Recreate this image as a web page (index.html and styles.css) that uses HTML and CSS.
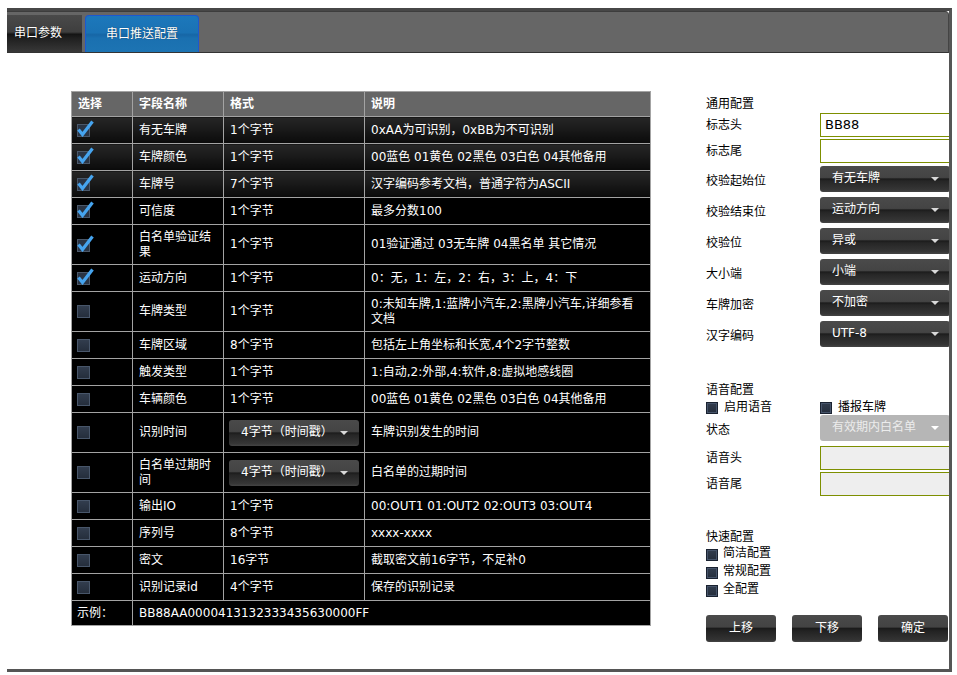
FILE: index.html
```html
<!DOCTYPE html>
<html lang="zh-CN">
<head>
<meta charset="utf-8">
<title>串口推送配置</title>
<link rel="stylesheet" href="styles.css">
</head>
<body>
<div class="frame">
  <div class="tabbar">
    <div class="tab tab-dark">串口参数</div>
    <div class="tab tab-active">串口推送配置</div>
  </div>
  <div class="content">
    <table class="fields">
      <colgroup><col class="c1"><col class="c2"><col class="c3"><col class="c4"></colgroup>
      <thead>
        <tr><th>选择</th><th>字段名称</th><th>格式</th><th>说明</th></tr>
      </thead>
      <tbody>
        <tr class="g"><td><span class="ck on"><svg width="17" height="17" viewBox="0 0 17 17"><rect x="0.5" y="4.5" width="12" height="12" fill="#2a3444" stroke="#4a586a"/><path d="M1.5 9.5 L5.5 14.5 L15.5 1.5" fill="none" stroke="#46a4ef" stroke-width="3.2"/></svg></span></td><td>有无车牌</td><td>1个字节</td><td>0xAA为可识别，0xBB为不可识别</td></tr>
        <tr class="g"><td><span class="ck on"><svg width="17" height="17" viewBox="0 0 17 17"><rect x="0.5" y="4.5" width="12" height="12" fill="#2a3444" stroke="#4a586a"/><path d="M1.5 9.5 L5.5 14.5 L15.5 1.5" fill="none" stroke="#46a4ef" stroke-width="3.2"/></svg></span></td><td>车牌颜色</td><td>1个字节</td><td>00蓝色 01黄色 02黑色 03白色 04其他备用</td></tr>
        <tr class="g"><td><span class="ck on"><svg width="17" height="17" viewBox="0 0 17 17"><rect x="0.5" y="4.5" width="12" height="12" fill="#2a3444" stroke="#4a586a"/><path d="M1.5 9.5 L5.5 14.5 L15.5 1.5" fill="none" stroke="#46a4ef" stroke-width="3.2"/></svg></span></td><td>车牌号</td><td>7个字节</td><td>汉字编码参考文档，普通字符为ASCII</td></tr>
        <tr><td><span class="ck on"><svg width="17" height="17" viewBox="0 0 17 17"><rect x="0.5" y="4.5" width="12" height="12" fill="#2a3444" stroke="#4a586a"/><path d="M1.5 9.5 L5.5 14.5 L15.5 1.5" fill="none" stroke="#46a4ef" stroke-width="3.2"/></svg></span></td><td>可信度</td><td>1个字节</td><td>最多分数100</td></tr>
        <tr class="tall"><td><span class="ck on"><svg width="17" height="17" viewBox="0 0 17 17"><rect x="0.5" y="4.5" width="12" height="12" fill="#2a3444" stroke="#4a586a"/><path d="M1.5 9.5 L5.5 14.5 L15.5 1.5" fill="none" stroke="#46a4ef" stroke-width="3.2"/></svg></span></td><td>白名单验证结果</td><td>1个字节</td><td>01验证通过 03无车牌 04黑名单 其它情况</td></tr>
        <tr><td><span class="ck on"><svg width="17" height="17" viewBox="0 0 17 17"><rect x="0.5" y="4.5" width="12" height="12" fill="#2a3444" stroke="#4a586a"/><path d="M1.5 9.5 L5.5 14.5 L15.5 1.5" fill="none" stroke="#46a4ef" stroke-width="3.2"/></svg></span></td><td>运动方向</td><td>1个字节</td><td>0：无，1：左，2：右，3：上，4：下</td></tr>
        <tr class="tall"><td><span class="box tbox"></span></td><td>车牌类型</td><td>1个字节</td><td>0:未知车牌,1:蓝牌小汽车,2:黑牌小汽车,详细参看文档</td></tr>
        <tr><td><span class="box tbox"></span></td><td>车牌区域</td><td>8个字节</td><td>包括左上角坐标和长宽,4个2字节整数</td></tr>
        <tr><td><span class="box tbox"></span></td><td>触发类型</td><td>1个字节</td><td>1:自动,2:外部,4:软件,8:虚拟地感线圈</td></tr>
        <tr><td><span class="box tbox"></span></td><td>车辆颜色</td><td>1个字节</td><td>00蓝色 01黄色 02黑色 03白色 04其他备用</td></tr>
        <tr class="tall"><td><span class="box tbox"></span></td><td>识别时间</td><td><div class="sel tsel">4字节（时间戳）</div></td><td>车牌识别发生的时间</td></tr>
        <tr class="tall"><td><span class="box tbox"></span></td><td>白名单过期时间</td><td><div class="sel tsel">4字节（时间戳）</div></td><td>白名单的过期时间</td></tr>
        <tr><td><span class="box tbox"></span></td><td>输出IO</td><td>1个字节</td><td>00:OUT1 01:OUT2 02:OUT3 03:OUT4</td></tr>
        <tr><td><span class="box tbox"></span></td><td>序列号</td><td>8个字节</td><td>xxxx-xxxx</td></tr>
        <tr><td><span class="box tbox"></span></td><td>密文</td><td>16字节</td><td>截取密文前16字节，不足补0</td></tr>
        <tr><td><span class="box tbox"></span></td><td>识别记录id</td><td>4个字节</td><td>保存的识别记录</td></tr>
        <tr class="ex"><td>示例：</td><td colspan="3">BB88AA0000413132333435630000FF</td></tr>
      </tbody>
    </table>

    <div class="panel">
      <div class="ptitle t1">通用配置</div>
      <div class="prow in1"><span class="plabel">标志头</span><div class="pin">BB88</div></div>
      <div class="prow in2"><span class="plabel">标志尾</span><div class="pin"></div></div>
      <div class="prow s1"><span class="plabel sl">校验起始位</span><div class="sel psel">有无车牌</div></div>
      <div class="prow sn"><span class="plabel sl">校验结束位</span><div class="sel psel">运动方向</div></div>
      <div class="prow sn"><span class="plabel sl">校验位</span><div class="sel psel">异或</div></div>
      <div class="prow sn"><span class="plabel sl">大小端</span><div class="sel psel">小端</div></div>
      <div class="prow sn"><span class="plabel sl">车牌加密</span><div class="sel psel">不加密</div></div>
      <div class="prow sn"><span class="plabel sl">汉字编码</span><div class="sel psel">UTF-8</div></div>

      <div class="ptitle t2">语音配置</div>
      <div class="cbrow">
        <span class="cbitem w114"><span class="box pbox"></span><span>启用语音</span></span>
        <span class="cbitem"><span class="box pbox"></span><span>播报车牌</span></span>
      </div>
      <div class="prow st"><span class="plabel sl">状态</span><div class="sel psel dis">有效期内白名单</div></div>
      <div class="prow v1"><span class="plabel">语音头</span><div class="pin grey"></div></div>
      <div class="prow v2"><span class="plabel">语音尾</span><div class="pin grey"></div></div>

      <div class="ptitle t3">快速配置</div>
      <div class="qrow"><span class="box pbox"></span><span>简洁配置</span></div>
      <div class="qrow"><span class="box pbox"></span><span>常规配置</span></div>
      <div class="qrow"><span class="box pbox"></span><span>全配置</span></div>

      <div class="btns">
        <div class="btn">上移</div>
        <div class="btn">下移</div>
        <div class="btn">确定</div>
      </div>
    </div>
  </div>
</div>
</body>
</html>
```

FILE: styles.css
```css
html, body {
  margin: 0;
  padding: 0;
  background: #fff;
}
body {
  font-family: "DejaVu Sans", "Noto Sans CJK SC", sans-serif;
  font-size: 12px;
  line-height: 16px;
  color: #000;
}

.frame {
  margin: 8px 0 0 7px;
  width: 942px;
  height: 658px;
  border-top: 3px solid #474747;
  border-right: 3px solid #555;
  border-bottom: 3px solid #555;
  background: #fff;
  display: flex;
  flex-direction: column;
}

/* tab bar */
.tabbar {
  flex: none;
  background: #666;
  border-bottom: 1px solid #333;
  border-top: 1px solid #3d3d3d;
  border-right: 1px solid #444;
  border-radius: 0 4px 0 0;
  box-sizing: content-box;
  height: 40px;
  display: flex;
  align-items: flex-end;
}
.tab {
  box-sizing: border-box;
  height: 37px;
  color: #fff;
  line-height: 36px;
  text-shadow: 0 0 1px rgba(0,0,0,0.6);
}
.tab-dark {
  width: 75px;
  padding-left: 7px;
  background: linear-gradient(to bottom, #4a4a4a 0%, #3e3e3e 46%, #141414 52%, #1f1f1f 62%, #383838 100%);
}
.tab-active {
  width: 114px;
  margin-left: 3px;
  text-align: center;
  border: 1px solid #1e58cf;
  border-bottom: none;
  border-radius: 4px 4px 0 0;
  background: linear-gradient(to bottom, #1c78bb 0%, #1a72b4 46%, #1666a6 52%, #1a70b0 62%, #1d74b3 100%);
}

/* content */
.content {
  flex: none;
  height: 616px;
  box-sizing: border-box;
  padding: 38px 0 0 64px;
  display: flex;
  align-items: flex-start;
  overflow: hidden;
}

/* table */
.fields {
  flex: none;
  width: 579px;
  border-collapse: collapse;
  table-layout: fixed;
  color: #fff;
  font-size: 12px;
  line-height: 15px;
}
.fields col.c1 { width: 61px; }
.fields col.c2 { width: 91px; }
.fields col.c3 { width: 141px; }
.fields col.c4 { width: 286px; }
.fields th,
.fields td {
  border: 1px solid #a3a3a3;
  padding: 0 5px 0 6px;
  text-align: left;
  vertical-align: middle;
}
.fields thead tr { height: 25px; }
.fields th {
  background: #666;
  font-weight: bold;
}
.fields td {
  background: #000;
}
.fields tbody tr { height: 27px; }
.fields tbody tr.tall { height: 40px; }
.fields tbody tr.ex { height: 25px; }
.fields tr.g td {
  background: linear-gradient(to bottom, #262626 0%, #1a1a1a 45%, #0a0a0a 100%);
}
.fields td:first-child { padding-left: 5px; }

.ck {
  display: block;
  width: 17px;
  height: 17px;
  margin-top: -3px;
}
.ck svg { display: block; }

.box {
  display: block;
  box-sizing: border-box;
  border: 1px solid #48566a;
  background: linear-gradient(to bottom, #323d4e, #252e3c);
}
.tbox {
  width: 13px;
  height: 13px;
}
.pbox {
  width: 12px;
  height: 12px;
  border-color: #1a2230;
  box-shadow: inset 0 0 0 1px #46546a;
}

/* select look */
.sel {
  position: relative;
  box-sizing: border-box;
  height: 26px;
  line-height: 25px;
  border-radius: 3px;
  color: #fff;
  padding-left: 12px;
  background: linear-gradient(to bottom, #4a4a4a 0%, #444 44%, #1c1c1c 50%, #262626 58%, #353535 90%, #444 100%);
  white-space: nowrap;
}
.sel::after {
  content: "";
  position: absolute;
  right: 11px;
  top: 11px;
  border-left: 4px solid transparent;
  border-right: 4px solid transparent;
  border-top: 4px solid #d8d8d8;
}
.tsel {
  width: 130px;
  margin-left: -1px;
}
.psel {
  width: 130px;
  flex: none;
}
.sel.dis {
  background: #b6b6b6;
  color: #ececec;
}
.sel.dis::after {
  border-top-color: #fff;
}

/* right panel */
.panel {
  flex: none;
  width: 244px;
  margin-left: 55px;
  padding-top: 5px;
}
.ptitle {
  line-height: 16px;
  height: 16px;
}
.prow {
  display: flex;
  align-items: center;
}
.plabel {
  width: 114px;
  flex: none;
}
.plabel.sl { padding-top: 4px; }
.pin {
  flex: none;
  box-sizing: border-box;
  width: 131px;
  height: 24px;
  border: 1px solid #7d8f00;
  background: #fff;
  font-size: 13px;
  line-height: 22px;
  padding-left: 4px;
}
.pin.grey { background: #eee; }

.in1 { margin-top: 1px; }
.in2 { margin-top: 2px; }
.s1 { margin-top: 3px; }
.sn { margin-top: 5px; }
.t2 { margin-top: 35px; }
.cbrow {
  display: flex;
  height: 16px;
  margin-top: 1px;
}
.cbitem {
  display: flex;
  align-items: flex-start;
}
.cbitem .box { margin-top: 3px; margin-right: 6px; }
.w114 { width: 114px; }
.st { margin-top: 0; }
.v1 { margin-top: 5px; }
.v2 { margin-top: 2px; }
.t3 { margin-top: 33px; }
.qrow {
  display: flex;
  align-items: flex-start;
  height: 18px;
}
.qrow .box { margin-top: 4px; margin-right: 5px; }

.btns {
  display: flex;
  gap: 16px;
  margin-top: 16px;
}
.btn {
  width: 70px;
  height: 27px;
  border-radius: 3px;
  color: #fff;
  text-align: center;
  line-height: 27px;
  background: linear-gradient(to bottom, #4a4a4a 0%, #434343 44%, #1b1b1b 50%, #232323 60%, #333 92%, #444 100%);
}
```
